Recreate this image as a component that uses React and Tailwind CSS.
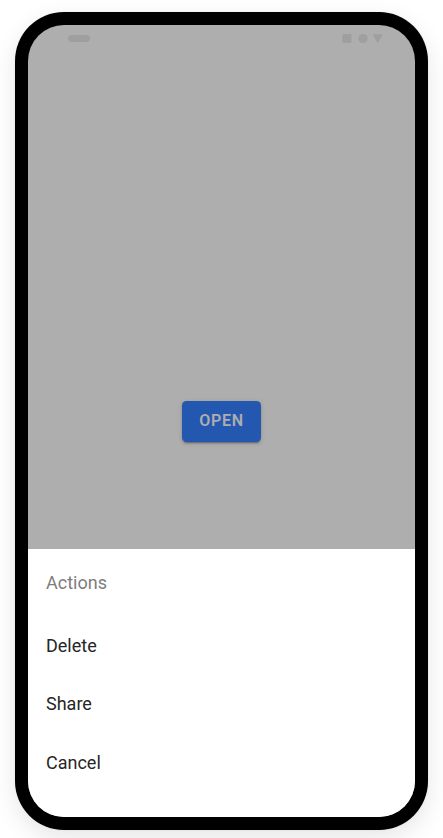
const actions = ["Delete", "Share", "Cancel"];

function StatusBar() {
  return (
    <div className="flex h-[27px] shrink-0 items-center justify-between pl-10 pr-8">
      <div className="h-[7px] w-[21.5px] rounded-full bg-[#9f9f9f]" />
      <svg width="41" height="11" viewBox="0 0 41 11" fill="#9f9f9f">
        <rect x="0.4" y="1" width="9" height="9" rx="1" />
        <circle cx="21" cy="5.5" r="4.6" />
        <path d="M31.4 1.2h8.4c.4 0 .6.4.4.8l-4.1 7.4c-.2.4-.7.4-.9 0L31 2c-.2-.4 0-.8.4-.8z" />
      </svg>
    </div>
  );
}

function ActionSheet() {
  return (
    <div className="h-[268px] shrink-0 bg-white px-[18px] pt-1 text-[18px] text-[#262626]">
      <div className="flex h-[58px] items-center text-[#7d7d7d]">Actions</div>
      <div className="pt-[5px]">
        {actions.map((label) => (
          <button key={label} className="flex h-[58.5px] w-full items-center text-left">
            {label}
          </button>
        ))}
      </div>
    </div>
  );
}

export default function App() {
  return (
    <div className="h-[838px] w-[443px] overflow-hidden bg-white pl-[15px] pt-3 font-[Roboto,sans-serif]">
      <div className="h-[818px] w-[413px] rounded-[49px] bg-black p-[13px] shadow-[0_0_2px_rgba(0,0,0,0.08),0_8px_24px_rgba(2,8,20,0.1)]">
        <div className="flex h-full flex-col overflow-hidden rounded-[36px] bg-[#aeaeae]">
          <StatusBar />
          <div className="flex flex-1 justify-center pt-[349px]">
            <button className="h-[41px] w-[79px] rounded-[4.5px] bg-[#2458b0] pb-[2px] text-[16px] font-semibold tracking-[0.045em] text-[#aeaeae] shadow-[0_3px_1px_-2px_rgba(0,0,0,0.2),0_2px_2px_0_rgba(0,0,0,0.14),0_1px_5px_0_rgba(0,0,0,0.12)]">
              OPEN
            </button>
          </div>
          <ActionSheet />
        </div>
      </div>
    </div>
  );
}
